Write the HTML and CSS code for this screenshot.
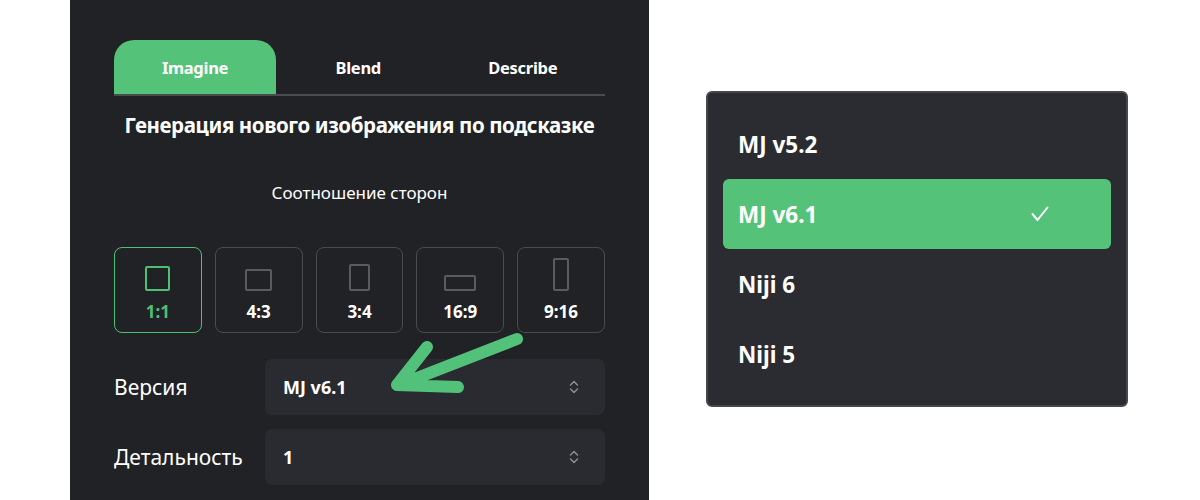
FILE: index.html
```html
<!DOCTYPE html>
<html lang="ru">
<head>
<meta charset="utf-8">
<title>Imagine</title>
<link rel="stylesheet" href="styles.css">
</head>
<body>
<div class="page">
  <section class="panel">
    <div class="tabs">
      <div class="tab active">Imagine</div>
      <div class="tab">Blend</div>
      <div class="tab">Describe</div>
    </div>
    <h1 class="title">Генерация нового изображения по подсказке</h1>
    <div class="subtitle">Соотношение сторон</div>
    <div class="ratios">
      <div class="ratio active">
        <div class="ratio-icon"><span class="shape" style="width:25px;height:25px"></span></div>
        <div class="ratio-label">1:1</div>
      </div>
      <div class="ratio">
        <div class="ratio-icon"><span class="shape" style="width:27px;height:22px"></span></div>
        <div class="ratio-label">4:3</div>
      </div>
      <div class="ratio">
        <div class="ratio-icon"><span class="shape" style="width:21px;height:27px"></span></div>
        <div class="ratio-label">3:4</div>
      </div>
      <div class="ratio">
        <div class="ratio-icon"><span class="shape" style="width:32px;height:16px"></span></div>
        <div class="ratio-label">16:9</div>
      </div>
      <div class="ratio">
        <div class="ratio-icon"><span class="shape" style="width:16px;height:33px"></span></div>
        <div class="ratio-label">9:16</div>
      </div>
    </div>
    <div class="row">
      <div class="row-label">Версия</div>
      <div class="select">
        <span class="select-value">MJ v6.1</span>
        <svg class="chev" width="10" height="16" viewBox="0 0 10 16"><path d="M1.5 6 L5 2.5 L8.5 6 M1.5 10 L5 13.5 L8.5 10" fill="none" stroke="#8b8c90" stroke-width="1.5" stroke-linecap="round" stroke-linejoin="round"/></svg>
      </div>
    </div>
    <div class="row">
      <div class="row-label">Детальность</div>
      <div class="select">
        <span class="select-value">1</span>
        <svg class="chev" width="10" height="16" viewBox="0 0 10 16"><path d="M1.5 6 L5 2.5 L8.5 6 M1.5 10 L5 13.5 L8.5 10" fill="none" stroke="#8b8c90" stroke-width="1.5" stroke-linecap="round" stroke-linejoin="round"/></svg>
      </div>
    </div>
    <svg class="arrow" width="579" height="500" viewBox="0 0 579 500">
      <path d="M447 339 L334 383 M357 347 L327 385 L388 387" fill="none" stroke="#52c27a" stroke-width="12" stroke-linecap="round" stroke-linejoin="round"/>
    </svg>
  </section>

  <div class="dropdown">
    <div class="item">MJ v5.2</div>
    <div class="item selected">MJ v6.1
      <svg class="check" width="18" height="16" viewBox="0 0 18 16"><path d="M1.5 8 L6.5 14 L16.5 1.5" fill="none" stroke="#fff" stroke-width="2" stroke-linecap="round" stroke-linejoin="round"/></svg>
    </div>
    <div class="item">Niji 6</div>
    <div class="item">Niji 5</div>
  </div>
</div>
</body>
</html>
```

FILE: styles.css
```css
* { box-sizing: border-box; }
html, body { margin: 0; padding: 0; background: #ffffff; }
body { font-family: "Noto Sans", "DejaVu Sans", sans-serif; color: #ffffff; }

.page {
  display: flex;
  align-items: flex-start;
  width: 1200px;
  height: 500px;
  overflow: hidden;
  padding-left: 70px;
}

.panel {
  position: relative;
  width: 579px;
  height: 500px;
  background: #212226;
  padding: 40px 44px 0;
  flex-shrink: 0;
}

.tabs {
  display: grid;
  grid-template-columns: 162px 1fr 1fr;
  height: 56px;
  border-bottom: 2px solid #4b4c50;
}
.tab {
  display: flex;
  align-items: center;
  justify-content: center;
  font-weight: 700;
  font-size: 16.5px;
  letter-spacing: -0.3px;
}
.tab.active {
  background: #55c27a;
  border-radius: 20px 20px 0 0;
}

.title {
  margin: 14px 0 0;
  font-size: 20.5px;
  line-height: 30px;
  font-weight: 700;
  text-align: center;
  letter-spacing: -0.4px;
}

.subtitle {
  margin-top: 43px;
  font-size: 17px;
  line-height: 20px;
  text-align: center;
}

.ratios {
  display: flex;
  gap: 13px;
  margin-top: 44px;
}
.ratio {
  width: 88px;
  height: 86px;
  border: 1.5px solid #4a4b4f;
  border-radius: 8px;
  padding-top: 9px;
  display: flex;
  flex-direction: column;
  align-items: center;
}
.ratio-icon {
  height: 34px;
  display: flex;
  align-items: flex-end;
  justify-content: center;
}
.shape {
  display: block;
  border: 2px solid #5a5b5f;
  border-radius: 2px;
}
.ratio-label {
  margin-top: 11px;
  font-size: 17px;
  line-height: 20px;
  font-weight: 700;
}
.ratio.active { border-color: #4fbf74; }
.ratio.active .shape { border-color: #4fbf74; }
.ratio.active .ratio-label { color: #4fbf74; }

.row {
  display: flex;
  align-items: center;
  margin-top: 26px;
}
.row + .row { margin-top: 14px; }
.row-label {
  width: 151px;
  font-size: 21px;
  flex-shrink: 0;
}
.select {
  flex: 1;
  height: 56px;
  background: #2a2b30;
  border-radius: 7px;
  display: flex;
  align-items: center;
  justify-content: space-between;
  padding: 0 26px 0 18px;
}
.select-value {
  font-size: 18px;
  font-weight: 700;
}

.arrow {
  position: absolute;
  left: 0;
  top: 0;
  pointer-events: none;
}

.dropdown {
  margin-left: 57px;
  margin-top: 91px;
  width: 422px;
  height: 316px;
  background: #2b2c31;
  border: 2px solid #46474b;
  border-radius: 6px;
  padding: 16px 15px;
}
.item {
  height: 70px;
  display: flex;
  align-items: center;
  justify-content: space-between;
  padding: 0 62px 0 15px;
  font-size: 22.5px;
  font-weight: 700;
  border-radius: 6px;
}
.item.selected { background: #55c27a; }
```
